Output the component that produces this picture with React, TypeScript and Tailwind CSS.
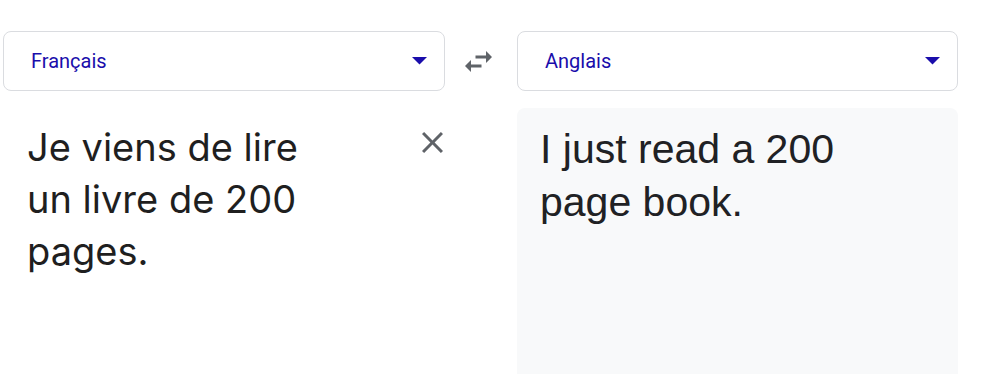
import React from 'react';

// ========================================================================
// Icons (Material glyphs, viewBox cropped to the glyph)

const CaretDown: React.FC = () => (
  <svg width="15" height="7.5" viewBox="7 10 10 5" className="fill-[#1a0dab]">
    <path d="M7 10l5 5 5-5z" />
  </svg>
);

const SwapIcon: React.FC = () => (
  <svg width="27" height="21" viewBox="3 5 18 14" className="fill-[#5f6368]">
    <path d="M6.99 11L3 15l3.99 4v-3H14v-2H6.99v-3zM21 9l-3.99-4v3H10v2h7.01v3L21 9z" />
  </svg>
);

const CloseIcon: React.FC = () => (
  <svg width="21" height="21" viewBox="5 5 14 14" className="fill-[#5f6368]">
    <path d="M19 6.41L17.59 5 12 10.59 6.41 5 5 6.41 10.59 12 5 17.59 6.41 19 12 13.41 17.59 19 19 17.59 13.41 12z" />
  </svg>
);

// ========================================================================
// Language selector

const LanguageSelect: React.FC<{ label: string }> = ({ label }) => (
  <button className="flex items-center justify-between h-[60px] w-full border border-[#dadce0] rounded-lg bg-white pl-[27px] pr-[17px]">
    <span className="text-[20px] text-[#1a0dab] font-['Roboto',sans-serif]">{label}</span>
    <CaretDown />
  </button>
);

// ========================================================================
//? App
// ========================================================================

export default function App() {
  return (
    <div className="w-[1001px] h-[374px] overflow-hidden bg-white pt-[31px] pl-[3px]">
      <div className="grid grid-cols-[442px_72px_441px] gap-y-[17px]">
        {/* Top row: selectors */}
        <LanguageSelect label="Français" />
        <div className="flex items-center justify-center pr-[5px]">
          <SwapIcon />
        </div>
        <LanguageSelect label="Anglais" />

        {/* Source text */}
        <div className="flex justify-between pl-[24px] pr-[2px]">
          <div className="text-[38px] leading-[52px] text-[#1f1f1f] font-['Inter',sans-serif] pt-[13px]">
            <div>Je viens de lire</div>
            <div>un livre de 200</div>
            <div>pages.</div>
          </div>
          <div className="pt-[24px]">
            <CloseIcon />
          </div>
        </div>
        <div />

        {/* Translation */}
        <div className="h-[300px] bg-[#f8f9fa] rounded-t-lg pl-[23px] pt-[15px]">
          <div className="text-[41px] leading-[53px] text-[#202124] font-['Liberation_Sans',Arial,sans-serif]">
            <div>I just read a 200</div>
            <div>page book.</div>
          </div>
        </div>
      </div>
    </div>
  );
}
